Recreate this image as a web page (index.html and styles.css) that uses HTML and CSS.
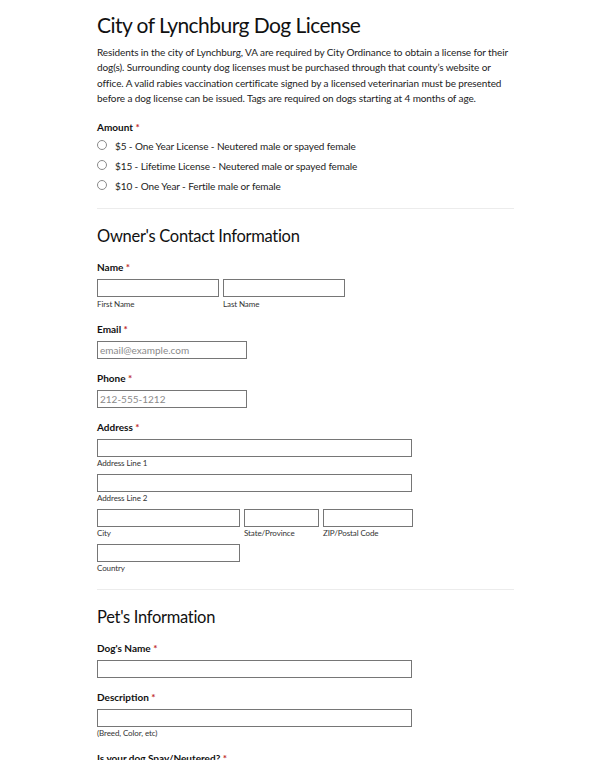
FILE: index.html
```html
<!DOCTYPE html>
<html>
<head>
<meta charset="utf-8">
<link rel="stylesheet" href="styles.css">
</head>
<body>
<div class="page">
  <h1 class="title">City of Lynchburg Dog License</h1>
  <p class="intro">Residents in the city of Lynchburg, VA are required by City Ordinance to obtain a license for their dog(s). Surrounding county dog licenses must be purchased through that county’s website or office. A valid rabies vaccination certificate signed by a licensed veterinarian must be presented before a dog license can be issued. Tags are required on dogs starting at 4 months of age.</p>

  <div class="field amount">
    <div class="label">Amount <span class="req">*</span></div>
    <label class="radio"><span class="circle"></span>$5 - One Year License - Neutered male or spayed female</label>
    <label class="radio"><span class="circle"></span>$15 - Lifetime License - Neutered male or spayed female</label>
    <label class="radio"><span class="circle"></span>$10 - One Year - Fertile male or female</label>
  </div>

  <hr class="divider">

  <h2 class="section">Owner's Contact Information</h2>

  <div class="field">
    <div class="label">Name <span class="req">*</span></div>
    <div class="row">
      <div class="col"><div class="input w122"></div><div class="sub">First Name</div></div>
      <div class="col"><div class="input w122"></div><div class="sub">Last Name</div></div>
    </div>
  </div>

  <div class="field">
    <div class="label">Email <span class="req">*</span></div>
    <div class="input w150 ph">email@example.com</div>
  </div>

  <div class="field">
    <div class="label">Phone <span class="req">*</span></div>
    <div class="input w150 ph">212-555-1212</div>
  </div>

  <div class="field address">
    <div class="label">Address <span class="req">*</span></div>
    <div class="input wfull"></div>
    <div class="sub">Address Line 1</div>
    <div class="input wfull"></div>
    <div class="sub">Address Line 2</div>
    <div class="row">
      <div class="col"><div class="input w143"></div><div class="sub">City</div></div>
      <div class="col"><div class="input w75"></div><div class="sub">State/Province</div></div>
      <div class="col"><div class="input w90"></div><div class="sub">ZIP/Postal Code</div></div>
    </div>
    <div class="input w143"></div>
    <div class="sub">Country</div>
  </div>

  <hr class="divider">

  <h2 class="section">Pet's Information</h2>

  <div class="field">
    <div class="label">Dog's Name <span class="req">*</span></div>
    <div class="input wfull"></div>
  </div>

  <div class="field">
    <div class="label">Description <span class="req">*</span></div>
    <div class="input wfull"></div>
    <div class="sub desc">(Breed, Color, etc)</div>
  </div>

  <div class="field">
    <div class="label">Is your dog Spay/Neutered? <span class="req">*</span></div>
  </div>
</div>
</body>
</html>
```

FILE: styles.css
```css
html, body {
  margin: 0;
  padding: 0;
  background: #fff;
}
body {
  font-family: "Lato", "Open Sans", sans-serif;
  color: #222;
}
.page {
  width: 417px;
  padding: 11px 0 0 97px;
}
.title {
  font-size: 21px;
  font-weight: 400;
  letter-spacing: -0.55px;
  margin: 0 0 6px;
  line-height: 28px;
  color: #111;
}
.intro {
  font-size: 10px;
  letter-spacing: -0.1px;
  line-height: 15.3px;
  margin: 0 0 14px;
  color: #222;
}
.field {
  margin-bottom: 12px;
}
.label {
  font-size: 10px;
  font-weight: 700;
  line-height: 14px;
  margin-bottom: 5px;
  color: #111;
}
.req {
  color: #c02b2b;
}
.radio {
  display: flex;
  align-items: center;
  font-size: 10px;
  letter-spacing: -0.1px;
  line-height: 14px;
  margin-bottom: 6px;
  color: #222;
}
.circle {
  width: 8px;
  height: 8px;
  border: 1px solid #8a8a8a;
  border-radius: 50%;
  margin: 0 8px 2px 0;
  box-sizing: content-box;
}
.divider {
  border: 0;
  border-top: 1px solid #ececec;
  margin: 15px 0 16px;
}
.address {
  margin-bottom: 14px;
}
.section {
  font-size: 16.5px;
  font-weight: 400;
  letter-spacing: -0.3px;
  line-height: 22px;
  margin: 0 0 13px;
  color: #111;
}
.row {
  display: flex;
  gap: 4px;
  margin-bottom: 5px;
}
.col {
  display: flex;
  flex-direction: column;
}
.input {
  height: 16px;
  border: 1px solid #767676;
  box-sizing: content-box;
  font-size: 10px;
  line-height: 16px;
  padding: 0 2px;
}
.ph {
  color: #8a8a8a;
}
.w122 { width: 116px; }
.w150 { width: 144px; }
.wfull { width: 309px; }
.w143 { width: 137px; }
.w75 { width: 69px; }
.w90 { width: 84px; }
.sub {
  font-size: 8px;
  letter-spacing: -0.1px;
  line-height: 11px;
  color: #333;
  margin: 1px 0 5px;
}
.row .sub {
  margin: 2px 0 0;
}
.address .row .sub {
  margin-top: 1px;
}
.field > .sub:last-child {
  margin-bottom: 0;
}
.desc {
  font-size: 8px;
}
```
